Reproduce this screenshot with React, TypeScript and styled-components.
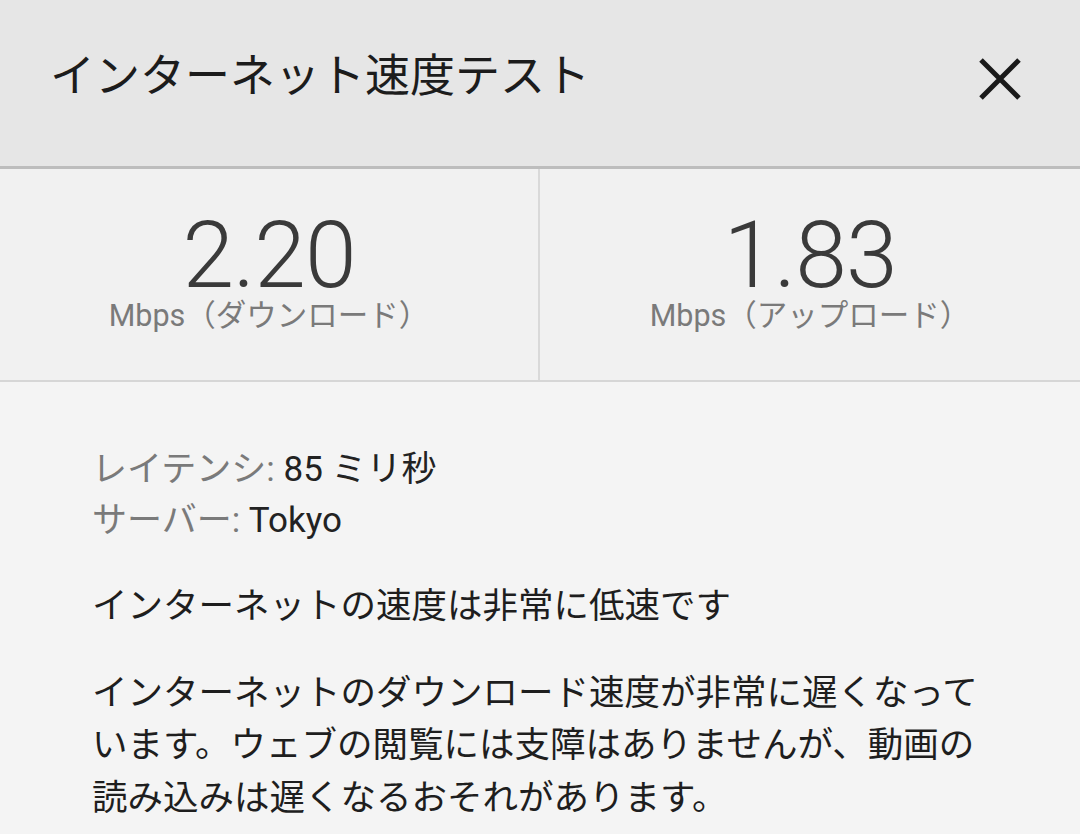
import React from 'react';
import styled, { createGlobalStyle } from 'styled-components';

const GlobalStyle = createGlobalStyle`
  html, body {
    margin: 0;
    padding: 0;
    background: #f4f4f4;
  }
  body {
    font-family: 'Roboto', 'Noto Sans CJK JP', sans-serif;
  }
`;

const Page = styled.div`
  width: 1080px;
  min-height: 834px;
  background: #f4f4f4;
  overflow: hidden;
`;

const Header = styled.header`
  height: 169px;
  background: #e6e6e6;
  border-bottom: 3px solid #bdbdbd;
  display: flex;
  align-items: center;
  justify-content: space-between;
  padding: 0 58px 8px 50px;
  box-sizing: border-box;
`;

const Title = styled.h1`
  margin: 0 0 14px 0;
  font-family: 'Noto Sans CJK JP', sans-serif;
  font-size: 45px;
  font-weight: 400;
  color: #1c1c1c;
  letter-spacing: 0;
`;

const CloseButton = styled.button`
  border: none;
  background: none;
  padding: 0;
  width: 44px;
  height: 44px;
  display: flex;
  align-items: center;
  justify-content: center;
  cursor: pointer;
`;

const Stats = styled.section`
  display: grid;
  grid-template-columns: 1fr 1fr;
  height: 213px;
  background: #f1f1f1;
  border-bottom: 2px solid #d6d6d6;
  box-sizing: border-box;
`;

const StatCell = styled.div<{ $divider?: boolean }>`
  display: flex;
  flex-direction: column;
  align-items: center;
  justify-content: center;
  padding-bottom: 2px;
  border-right: ${(p) => (p.$divider ? '2px solid #d9d9d9' : 'none')};
`;

const StatValue = styled.div`
  font-family: 'Roboto', sans-serif;
  font-weight: 300;
  font-size: 93px;
  line-height: 84px;
  color: #3a3a3a;
  letter-spacing: -1px;
`;

const StatUnit = styled.div`
  font-family: 'Roboto', 'Noto Sans CJK JP', sans-serif;
  font-size: 30.5px;
  line-height: 36px;
  color: #7a7a7a;
`;

const Body = styled.section`
  padding: 62px 92px 0 92px;
`;

const InfoLine = styled.div`
  font-family: 'Roboto', 'Noto Sans CJK JP', sans-serif;
  font-size: 35px;
  line-height: 51px;
  color: #222;
`;

const InfoLabel = styled.span`
  color: #7a7a7a;
`;

const Paragraph = styled.p<{ $gap: number }>`
  margin: ${(p) => p.$gap}px 0 0 0;
  font-family: 'Noto Sans CJK JP', sans-serif;
  font-size: 35.5px;
  line-height: 52.5px;
  color: #1e1e1e;
  line-break: strict;
`;

const CloseIcon = () => (
  <svg width="44" height="44" viewBox="0 0 44 44">
    <path d="M3 3 L41 41 M41 3 L3 41" stroke="#1a1a1a" strokeWidth="5" strokeLinecap="butt" />
  </svg>
);

export default function App() {
  return (
    <Page>
      <GlobalStyle />
      <Header>
        <Title>インターネット速度テスト</Title>
        <CloseButton aria-label="閉じる">
          <CloseIcon />
        </CloseButton>
      </Header>
      <Stats>
        <StatCell $divider>
          <StatValue>2.20</StatValue>
          <StatUnit>Mbps（ダウンロード）</StatUnit>
        </StatCell>
        <StatCell>
          <StatValue>1.83</StatValue>
          <StatUnit>Mbps（アップロード）</StatUnit>
        </StatCell>
      </Stats>
      <Body>
        <InfoLine>
          <InfoLabel>レイテンシ:</InfoLabel> 85 ミリ秒
        </InfoLine>
        <InfoLine>
          <InfoLabel>サーバー:</InfoLabel> Tokyo
        </InfoLine>
        <Paragraph $gap={31}>インターネットの速度は非常に低速です</Paragraph>
        <Paragraph $gap={34}>
          インターネットのダウンロード速度が非常に遅くなっています。ウェブの閲覧には支障はありませんが、動画の読み込みは遅くなるおそれがあります。
        </Paragraph>
      </Body>
    </Page>
  );
}
